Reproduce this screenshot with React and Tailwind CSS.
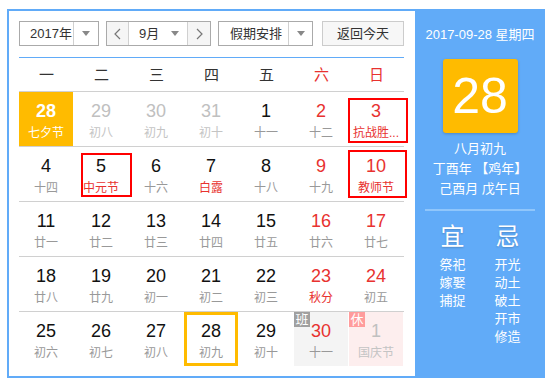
import React from 'react';

const RED = 'text-[#e8322f]';

const weeks = [
  [
    { d: 28, l: '七夕节', sel: true },
    { d: 29, l: '初八', other: true },
    { d: 30, l: '初九', other: true },
    { d: 31, l: '初十', other: true },
    { d: 1, l: '十一' },
    { d: 2, l: '十二', we: true },
    { d: 3, l: '抗战胜...', we: true, fest: true, box: 'left-[-1px] top-[6px] w-[60px] h-[45px]' },
  ],
  [
    { d: 4, l: '十四' },
    { d: 5, l: '中元节', fest: true, box: 'left-[7px] top-[6px] w-[51px] h-[44px]' },
    { d: 6, l: '十六' },
    { d: 7, l: '白露', fest: true },
    { d: 8, l: '十八' },
    { d: 9, l: '十九', we: true },
    { d: 10, l: '教师节', we: true, fest: true, box: 'left-[-1px] top-[3px] w-[59px] h-[48px]' },
  ],
  [
    { d: 11, l: '廿一' },
    { d: 12, l: '廿二' },
    { d: 13, l: '廿三' },
    { d: 14, l: '廿四' },
    { d: 15, l: '廿五' },
    { d: 16, l: '廿六', we: true },
    { d: 17, l: '廿七', we: true },
  ],
  [
    { d: 18, l: '廿八' },
    { d: 19, l: '廿九' },
    { d: 20, l: '初一' },
    { d: 21, l: '初二' },
    { d: 22, l: '初三' },
    { d: 23, l: '秋分', we: true, fest: true },
    { d: 24, l: '初五', we: true },
  ],
  [
    { d: 25, l: '初六' },
    { d: 26, l: '初七' },
    { d: 27, l: '初八' },
    { d: 28, l: '初九', today: true },
    { d: 29, l: '初十' },
    { d: 30, l: '十一', we: true, ban: true },
    { d: 1, l: '国庆节', other: true, xiu: true },
  ],
];

const Caret = () => (
  <span className="block w-0 h-0 border-l-[4px] border-r-[4px] border-t-[5px] border-l-transparent border-r-transparent border-t-[#888]" />
);

const Chevron = ({ dir }) => (
  <svg width="7" height="12" viewBox="0 0 7 12" fill="none" stroke="#777" strokeWidth="1.2">
    {dir === 'left' ? <polyline points="6,1 1,6 6,11" /> : <polyline points="1,1 6,6 1,11" />}
  </svg>
);

const DayCell = ({ c }) => {
  let bg = '';
  if (c.sel) bg = 'bg-[#ffbb00]';
  else if (c.ban) bg = 'bg-[#f4f4f4]';
  else if (c.xiu) bg = 'bg-[#fdeeee]';

  let num = 'text-[#111]';
  if (c.sel) num = 'text-white font-bold';
  else if (c.other) num = 'text-[#c0c0c0]';
  else if (c.we) num = RED;

  let lunar = 'text-[#999]';
  if (c.sel) lunar = 'text-white';
  else if (c.other) lunar = 'text-[#c4c4c4]';
  else if (c.fest) lunar = RED;

  return (
    <div className="relative">
      <div className={`w-[54px] h-[54px] flex flex-col items-center pt-[9px] ${bg}`}>
        <span className={`text-[18px] leading-[21px] ${num}`}>{c.d}</span>
        <span className={`text-[12px] leading-[16px] mt-[3px] whitespace-nowrap ${lunar}`}>{c.l}</span>
      </div>
      {c.box && <div className={`absolute border-2 border-[#ff0000] ${c.box}`} />}
      {c.today && <div className="absolute inset-0 w-[54px] h-[54px] border-[3px] border-[#ffbb00]" />}
      {c.ban && (
        <span className="absolute left-0 top-0 w-[16px] h-[15px] bg-[#a0a0a0] text-white text-[13px] leading-[15px] text-center">班</span>
      )}
      {c.xiu && (
        <span className="absolute left-0 top-0 w-[16px] h-[15px] bg-[#ff9c9c] text-white text-[13px] leading-[15px] text-center">休</span>
      )}
    </div>
  );
};

export default function App() {
  const heads = ['一', '二', '三', '四', '五', '六', '日'];
  return (
    <div className="w-[549px] h-[384px] bg-white pt-[9px] pl-[7px] font-['Liberation_Sans','Noto_Sans_CJK_SC',sans-serif]">
      <div className="w-[538px] h-[369px] border-2 border-[#61abf8] flex">
        {/* left calendar */}
        <div className="w-[406px] pl-[10px] pr-[11px] pt-[10px]">
          <div className="flex h-[25px] text-[13px] text-[#333]">
            <div className="w-[80px] flex border border-[#aaa]">
              <span className="flex-1 pl-[10px] leading-[23px]">2017年</span>
              <span className="w-[25px] border-l border-[#d0d0d0] flex items-center justify-center"><Caret /></span>
            </div>
            <div className="ml-[7px] w-[105px] flex border border-[#aaa]">
              <span className="w-[22px] bg-[#f5f5f5] border-r border-[#d0d0d0] flex items-center justify-center"><Chevron dir="left" /></span>
              <span className="flex-1 flex items-center pl-[10px] pr-[8px]">
                <span className="flex-1 leading-[23px]">9月</span>
                <Caret />
              </span>
              <span className="w-[23px] bg-[#f5f5f5] border-l border-[#d0d0d0] flex items-center justify-center"><Chevron dir="right" /></span>
            </div>
            <div className="ml-[7px] w-[95px] flex border border-[#aaa]">
              <span className="flex-1 pl-[11px] leading-[23px]">假期安排</span>
              <span className="w-[24px] border-l border-[#d0d0d0] flex items-center justify-center"><Caret /></span>
            </div>
            <div className="ml-[9px] w-[82px] border border-[#ccc] bg-[#f7f7f7] text-center leading-[23px]">返回今天</div>
          </div>

          <div className="mt-[11px] h-px bg-[#61abf8]" />

          <div className="grid grid-cols-7 h-[34px] border-b border-[#d0d0d0] text-[15px]">
            {heads.map((h, i) => (
              <span key={h} className={`text-center leading-[33px] ${i >= 5 ? RED : 'text-[#333]'}`}>{h}</span>
            ))}
          </div>

          {weeks.map((w, ri) => (
            <div key={ri} className={`grid grid-cols-7 ${ri < 4 ? 'h-[55px] border-b border-[#d0d0d0]' : 'h-[54px]'}`}>
              {w.map((c, ci) => (
                <DayCell key={ci} c={c} />
              ))}
            </div>
          ))}
        </div>

        {/* right panel */}
        <div className="flex-1 bg-[#61abf8] mr-[-2px] flex flex-col items-center text-white pt-[15px]">
          <div className="text-[13px] leading-[18px]">2017-09-28 星期四</div>
          <div className="mt-[15px] w-[75px] h-[74px] rounded-[3px] bg-[#ffbb00] shadow-[0_1px_3px_rgba(0,0,0,0.2)] flex items-center justify-center text-[50px] leading-none">
            28
          </div>
          <div className="mt-[6px] text-[13px] leading-[20px] text-center">
            <div>八月初九</div>
            <div>丁酉年 【鸡年】</div>
            <div>己酉月 戊午日</div>
          </div>
          <div className="mt-[10px] w-[110px] h-[2px] bg-[#90c6fb]" />
          <div className="mt-[12px] w-[110px] grid grid-cols-2">
            <div className="flex flex-col items-center">
              <span className="text-[24px] leading-[28px] [text-shadow:0_1px_2px_rgba(0,0,0,0.2)]">宜</span>
              <div className="mt-[5px] text-[13px] leading-[18px] text-center">
                <div>祭祀</div>
                <div>嫁娶</div>
                <div>捕捉</div>
              </div>
            </div>
            <div className="flex flex-col items-center">
              <span className="text-[24px] leading-[28px] [text-shadow:0_1px_2px_rgba(0,0,0,0.2)]">忌</span>
              <div className="mt-[5px] text-[13px] leading-[18px] text-center">
                <div>开光</div>
                <div>动土</div>
                <div>破土</div>
                <div>开市</div>
                <div>修造</div>
              </div>
            </div>
          </div>
        </div>
      </div>
    </div>
  );
}
